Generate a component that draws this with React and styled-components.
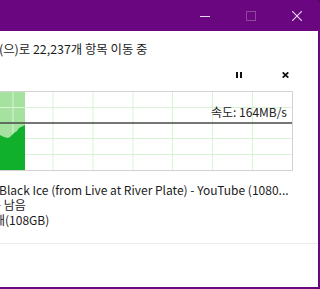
import styled, { createGlobalStyle } from "styled-components";

const GlobalStyle = createGlobalStyle`
  html, body {
    margin: 0;
    padding: 0;
    background: #3a1440;
  }
  body {
    font-family: "Noto Sans CJK KR", "Liberation Sans", sans-serif;
    color: #1b1b1b;
  }
`;

const Window = styled.div`
  width: 320px;
  height: 289px;
  display: flex;
  flex-direction: column;
  overflow: hidden;
  border-top-right-radius: 4px;
  border-bottom-right-radius: 3px;
  background: #6a0680;
`;

const TitleBar = styled.div`
  height: 31px;
  flex: none;
  display: flex;
  justify-content: flex-end;
  background: #6a0680;
`;

const CaptionButton = styled.div`
  width: 46px;
  height: 31px;
  display: flex;
  align-items: center;
  justify-content: center;
  color: ${(p) => (p.$disabled ? "#8d469c" : "#ead8ee")};
`;

const Body = styled.div`
  flex: 1;
  display: flex;
  flex-direction: column;
  background: #ffffff;
  margin-right: 2px;
  margin-bottom: 2px;
  overflow: hidden;
`;

const Heading = styled.div`
  margin: 10px 0 0 -1px;
  font-size: 12.4px;
  line-height: 16px;
  white-space: nowrap;
`;

const Controls = styled.div`
  display: flex;
  justify-content: flex-end;
  margin-top: 5px;
  padding-right: 10px;
`;

const IconButton = styled.div`
  width: 46px;
  height: 26px;
  display: flex;
  align-items: center;
  justify-content: center;
  color: #111;
`;

const Chart = styled.div`
  position: relative;
  width: 292px;
  height: 78px;
  margin: 3px 0 0 -1px;
  border: 1px solid #d2d2d2;
  background: #fff;
  flex: none;

  svg {
    display: block;
  }
`;

const Speed = styled.span`
  position: absolute;
  right: 5px;
  top: 13px;
  font-size: 12px;
  line-height: 14px;
  color: #222;
  white-space: nowrap;
`;

const Details = styled.div`
  margin-top: 11px;
  display: flex;
  flex-direction: column;
`;

const Line = styled.div`
  font-size: 12px;
  line-height: 15px;
  white-space: nowrap;
  margin-left: ${(p) => -(p.$cut || 0)}px;
`;

const Divider = styled.div`
  margin-top: 16px;
  height: 1px;
  background: #ececec;
`;

const gridX = [13, 53, 93, 133, 172.5, 212.5, 252.5];
const gridY = [15.5, 46.5, 62.5];
const dark = "0,43 4,45 8,46 10,45 12,43 14,41 17,39 19,36 21,35 23,34 25,33 25,78 0,78";

function Graph() {
  return (
    <svg width="292" height="78" viewBox="0 0 292 78">
      <rect x="0" y="0" width="25" height="78" fill="#a6e29f" />
      {gridX.map((x) => (
        <line key={x} x1={x} y1="0" x2={x} y2="78" stroke="#d8f3d6" strokeWidth="1" />
      ))}
      {gridY.map((y) => (
        <line key={y} x1="0" y1={y} x2="292" y2={y} stroke="#d8f3d6" strokeWidth="1" />
      ))}
      <polygon points={dark} fill="#10b02c" />
      <line x1="0" y1="31" x2="292" y2="31" stroke="#474747" strokeWidth="1.6" />
    </svg>
  );
}

export default function App() {
  return (
    <>
      <GlobalStyle />
      <Window>
        <TitleBar>
          <CaptionButton>
            <svg width="10" height="10" viewBox="0 0 10 10">
              <line x1="0" y1="5.5" x2="10" y2="5.5" stroke="currentColor" strokeWidth="1" />
            </svg>
          </CaptionButton>
          <CaptionButton $disabled>
            <svg width="10" height="10" viewBox="0 0 10 10">
              <rect x="0.5" y="0.5" width="9" height="9" fill="none" stroke="currentColor" strokeWidth="1" />
            </svg>
          </CaptionButton>
          <CaptionButton>
            <svg width="10" height="10" viewBox="0 0 10 10">
              <path d="M0 0 L10 10 M10 0 L0 10" stroke="currentColor" strokeWidth="1.1" />
            </svg>
          </CaptionButton>
        </TitleBar>
        <Body>
          <Heading>(으)로 22,237개 항목 이동 중</Heading>
          <Controls>
            <IconButton>
              <svg width="6" height="6" viewBox="0 0 6 6">
                <rect x="0" y="0" width="2" height="6" fill="currentColor" />
                <rect x="4" y="0" width="2" height="6" fill="currentColor" />
              </svg>
            </IconButton>
            <IconButton>
              <svg width="7" height="6" viewBox="0 0 7 6">
                <path d="M0.7 0.4 L6.3 5.6 M6.3 0.4 L0.7 5.6" stroke="currentColor" strokeWidth="1.8" />
              </svg>
            </IconButton>
          </Controls>
          <Chart>
            <Graph />
            <Speed>속도: 164MB/s</Speed>
          </Chart>
          <Details>
            <Line $cut={1}>Black Ice (from Live at River Plate) - YouTube (1080...</Line>
            <Line $cut={10}>분 남음</Line>
            <Line $cut={6}>개(108GB)</Line>
          </Details>
          <Divider />
        </Body>
      </Window>
    </>
  );
}
